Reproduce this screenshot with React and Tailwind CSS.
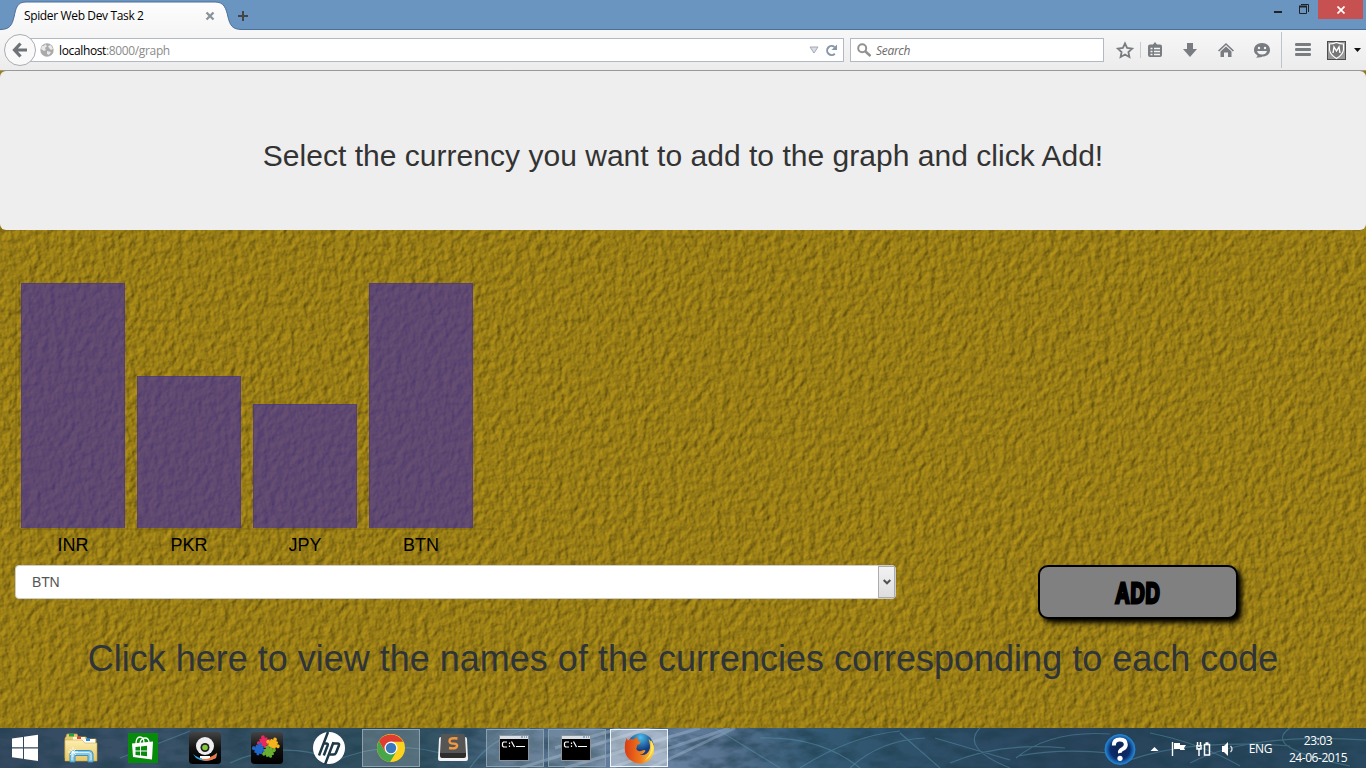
import React from "react";

const bars = [
  { code: "INR", height: "h-[245px]" },
  { code: "PKR", height: "h-[152px]" },
  { code: "JPY", height: "h-[124px]" },
  { code: "BTN", height: "h-[245px]" },
];

function TabStrip() {
  return (
    <div className="relative flex h-[30px] shrink-0 items-start border-b border-[#4c6f9a] bg-[#6a95c0]">
      <svg className="absolute left-0 top-0" width="250" height="31">
        <defs>
          <linearGradient id="tab" x2="0" y2="1">
            <stop stopColor="#fdfdfd" />
            <stop offset="1" stopColor="#f6f6f6" />
          </linearGradient>
        </defs>
        <path d="M0 31V29.5C10 29.5 12 25 14 17C16 8 17 2 26 2H215C224 2 226 8 228 17C230 25 232 29.5 242 29.5V31Z" fill="url(#tab)" />
        <path d="M0 29.5C10 29.5 12 25 14 17C16 8 17 2 26 2H215C224 2 226 8 228 17C230 25 232 29.5 242 29.5" fill="none" stroke="#4c6f9a" />
      </svg>
      <div className="relative flex h-[32px] w-[250px] items-center pl-6">
        <span className="w-[181px] whitespace-nowrap font-['Open_Sans',sans-serif] text-[12px] tracking-[-0.36px] text-black">Spider Web Dev Task 2</span>
        <svg width="10" height="10" viewBox="0 0 10 10" stroke="#89929b" strokeWidth="2.3"><path d="M1.500 1.500l7 7M8.500 1.500l-7 7" /></svg>
        <svg className="ml-[23px] shrink-0" width="10" height="10" viewBox="0 0 10 10" stroke="#454545" strokeWidth="2"><path d="M5 0v10M0 5h10" /></svg>
      </div>
      <div className="ml-auto mr-[3px] flex">
        <svg width="64" height="20">
          <rect x="0" y="11" width="8" height="2" fill="#222" />
          <path d="M25.500 6.500h7v7h-7zM27 4.500h7.500v7.500" fill="none" stroke="#222" />
          <path d="M25 6.500h8" stroke="#222" strokeWidth="2" />
        </svg>
        <div className="-ml-[20px] flex h-[19px] w-[45px] items-center justify-center bg-[#c75050]">
          <svg width="8" height="8" viewBox="0 0 8 8" stroke="#fff" strokeWidth="1.7"><path d="M.5 .5l7 7M7.500 .5l-7 7" /></svg>
        </div>
      </div>
    </div>
  );
}

function ToolbarIcons() {
  return (
    <svg width="262" height="40" viewBox="1104 30 262 40" className="shrink-0">
      <g fill="#797c80">
        <path d="M1125 43.500l2.100 4.500 5 .6-3.700 3.400 1 5-4.400-2.500-4.400 2.500 1-5-3.700-3.400 5-.6z" fill="none" stroke="#797c80" strokeWidth="1.800" />
        <path d="M1140.500 42v16" stroke="#c8ccd2" />
        <path d="M1150 44.500h3l2-2.500 2 2.500h3q2 0 2 2v8.500q0 2-2 2h-10q-2 0-2-2v-8.500q0-2 2-2z" />
        <path d="M1150.500 48.500h2M1154 48.500h6M1150.500 51.500h2M1154 51.500h6M1150.500 54.500h2M1154 54.500h6" stroke="#f5f5f5" strokeWidth="1.500" />
        <path d="M1187 43h6v6h4l-7 8-7-8h4z" />
        <path d="M1226 43l8 7.500-1.200 1-6.800-6.500-6.800 6.500-1.200-1z" />
        <path d="M1226 46.500l5.500 5v5.500h-3.500v-4.500h-4v4.500h-3.500v-5.500z" />
        <path d="M1262 43c4.800 0 8 3 8 7s-3.200 6.500-7.500 6.500q-1.200 1-6.500 1.300q1.800-1.400 1.400-2.500c-2-1-3.400-3-3.400-5.300 0-4 3.200-7 8-7z" />
        <circle cx="1259" cy="48" r="1.200" fill="#f4f4f4" /><circle cx="1265" cy="48" r="1.200" fill="#f4f4f4" />
        <path d="M1257 51h10q-1 3.500-5 3.500t-5-3.500" fill="#f4f4f4" />
        <path d="M1281.500 32v36" stroke="#bfc4ca" />
        <rect x="1295" y="43" width="16" height="3" rx="1.200" /><rect x="1295" y="48" width="16" height="3" rx="1.200" /><rect x="1295" y="53" width="16" height="3" rx="1.200" />
      </g>
      <rect x="1327.500" y="41.500" width="18" height="18" fill="#999" stroke="#4d4d4d" />
      <path d="M1329.500 44q3.500 0 7-1.500 3.500 1.500 7 1.500v6q-1 5-7 8.500-6-3.500-7-8.500z" fill="#777" stroke="#fff" strokeWidth="1.200" />
      <path d="M1333 53l1-6 2.500 4 2.500-4 1 6" stroke="#fff" strokeWidth="1.400" fill="none" />
      <path d="M1354 48h7l-3.500 4z" fill="#111" />
    </svg>
  );
}

function Toolbar() {
  return (
    <div className="flex h-[41px] shrink-0 items-center border-b border-[#999] bg-gradient-to-b from-[#f7f7f7] to-[#ececec] font-['Open_Sans',sans-serif] text-[12px]">
      <div className="z-10 ml-[4px] flex size-[32px] shrink-0 items-center justify-center rounded-full border border-[#a8adb2] bg-[#f9f9f9]">
        <svg width="16" height="16" viewBox="0 0 16 16" fill="none" stroke="#6e7377" strokeWidth="3.200"><path d="M8.500 1.500L2.500 8l6 6.500M2.500 8H15" /></svg>
      </div>
      <div className="-ml-[6px] flex h-[24px] w-[814px] items-center border border-[#b1bac4] bg-white pl-[9px] pr-[5px]">
        <svg width="14" height="14" viewBox="0 0 14 14"><circle cx="7" cy="7" r="6.700" fill="#aaa" /><path d="M2 3q3 0 3-2l2 2-2 2 1 2-2 1-3-2zM8 3l3-1 2 4-2 1-2-2zM7 8l4 1-2 3-2-1z" fill="#e8e8e8" /></svg>
        <span className="ml-[5px] pt-[2px] tracking-[-0.36px] text-black">localhost<span className="text-[#8b8b8b]">:8000/graph</span></span>
        <svg className="ml-auto" width="10" height="8"><path d="M1 1h8l-4 6z" fill="#d8dde6" stroke="#a3aab3" /></svg>
        <svg className="ml-[6px]" width="13" height="13" viewBox="0 0 13 13"><path d="M9.800 9.700A4.500 4.500 0 1 1 9.500 3" fill="none" stroke="#8796a6" strokeWidth="2" /><path d="M12 .5V6H6.500z" fill="#8796a6" /></svg>
      </div>
      <div className="ml-[6px] flex h-[24px] w-[254px] items-center border border-[#b1bac4] bg-white pl-[6px]">
        <svg width="14" height="14" viewBox="0 0 14 14" fill="none" stroke="#929292" strokeWidth="2"><circle cx="5.200" cy="5.200" r="4" /><path d="M8 8l5.500 5" strokeWidth="2.600" /></svg>
        <span className="ml-[5px] pt-[2px] italic tracking-[-0.3px] text-[#6b6b6b]">Search</span>
      </div>
      <ToolbarIcons />
    </div>
  );
}

function StoneTexture() {
  return (
    <svg className="absolute inset-0 size-full" aria-hidden="true">
      <filter id="stone" x="0" y="0" width="100%" height="100%" colorInterpolationFilters="sRGB">
        <feTurbulence type="fractalNoise" baseFrequency="0.15 0.12" numOctaves="4" seed="8" result="n" />
        <feColorMatrix in="n" type="matrix" values="0 0 0 0 0  0 0 0 0 0  0 0 0 0 0  1 0 0 0 0" />
        <feDiffuseLighting surfaceScale="1.200" diffuseConstant="1.100" lightingColor="#ab8c18">
          <feDistantLight azimuth="215" elevation="54" />
        </feDiffuseLighting>
      </filter>
      <rect width="100%" height="100%" fill="#a08015" filter="url(#stone)" />
    </svg>
  );
}

function Page() {
  return (
    <main className="relative flex h-[657px] flex-col overflow-hidden bg-[#a08015] font-['Liberation_Sans',sans-serif]">
      <StoneTexture />
      <header className="relative flex h-[159px] shrink-0 items-center justify-center rounded-[6px] bg-[#eee] pt-[9px]">
        <h1 className="whitespace-nowrap text-[30px] leading-[33px] tracking-[0.025px] text-[#333]">Select the currency you want to add to the graph and click Add!</h1>
      </header>
      <section className="relative ml-[15px] mt-[47px] w-[482px]">
        <div className="flex h-[253px] items-end gap-[12px] border-b-2 border-l-2 border-[#6b5710]/25 pl-[4px]">
          {bars.map((b) => (
            <div key={b.code} className={"w-[104px] border border-b-0 border-[#4b3677]/50 bg-[#402da2]/65 " + b.height} />
          ))}
        </div>
        <div className="flex gap-[12px] pl-[6px] pt-[3px]">
          {bars.map((b) => (
            <span key={b.code} className="w-[104px] text-center text-[18px] leading-[24px] text-black">{b.code}</span>
          ))}
        </div>
      </section>
      <div className="relative mt-[8px] flex h-[56px] items-start pl-[15px]">
        <div className="flex h-[34px] w-[881px] shrink-0 items-center justify-between rounded-[4px] border border-[#ccc] bg-white pl-[16px] text-[14px] tracking-[-0.2px] text-[#555]">
          BTN
          <span className="flex h-full w-[17px] items-center justify-center border border-[#acacac] bg-gradient-to-b from-[#f2f2f2] to-[#dedede]">
            <svg width="8" height="6" viewBox="0 0 8 6" fill="none" stroke="#505050" strokeWidth="2"><path d="M.7 1L4 4.300 7.300 1" /></svg>
          </span>
        </div>
        <button className="ml-[142px] flex h-[54px] w-[200px] items-center justify-center rounded-[10px] border-2 border-black bg-[#808080] pt-[3px] shadow-[4px_4px_5px_#000]">
          <span className="inline-block scale-x-[0.680] -skew-x-2 font-['Liberation_Sans',sans-serif] text-[29px] font-bold leading-none tracking-[1px] text-black [-webkit-text-stroke:3px_black]">ADD</span>
        </button>
      </div>
      <p className="relative mt-[18px] whitespace-nowrap text-center text-[36px] leading-[40px] text-[#2e3438]">Click here to view the names of the currencies corresponding to each code</p>
    </main>
  );
}

function Slot({ children, active = "" }) {
  return <div className={"flex h-[38px] w-[58px] shrink-0 items-center justify-center border " + (active || "border-transparent")}>{children}</div>;
}

function WindowsIcon() {
  return <svg width="28" height="28" viewBox="0 0 28 28" fill="#fff"><path d="M1 4.500L12 3V13.300H1zM13 2.800L27 .8V13.300H13zM1 14.500H12V24.800L1 23.300zM13 14.500H27V27L13 25z" /></svg>;
}

function FolderIcon() {
  return (
    <svg width="34" height="32" viewBox="0 0 34 32">
      <defs><linearGradient id="fold" x2="0" y2="1"><stop stopColor="#fdeeb0" /><stop offset="1" stopColor="#e5c867" /></linearGradient></defs>
      <path d="M2 5l1-3h10l1 3h8l1 2h9v19H1V6z" fill="#e6ca72" stroke="#c5a34c" strokeWidth=".7" />
      <rect x="5" y="2" width="5" height="2.500" fill="#1ba836" /><path d="M9 5h12v5H9z" fill="#fff5d0" /><rect x="13" y="4.500" width="4" height="2.500" fill="#d54e31" />
      <path d="M19 7h12v4H19z" fill="#fff" /><rect x="22" y="6.500" width="4" height="2.500" fill="#2987d4" />
      <path d="M1 8h17l3 3h12v18H1z" fill="url(#fold)" stroke="#cba84c" strokeWidth=".6" />
      <path d="M6 30V22q0-3.500 4-3.500h15q4 0 4 3.500v8h-5v-6.500H11V30z" fill="#8ac8e2" stroke="#3c92bd" />
      <path d="M8 28v-5.500q0-2 3-2h13q3 0 3 2V28" fill="none" stroke="#d2f1fb" />
      <path d="M9 15v10M4 20h10M6 17l6 6M12 17l-6 6" stroke="#fff" strokeWidth=".8" />
    </svg>
  );
}

function StoreIcon() {
  return (
    <svg width="30" height="30" viewBox="0 0 30 30">
      <rect width="30" height="30" fill="#078b0b" />
      <path d="M4 10.500l21-2-1 18L5 24z" fill="#fff" />
      <path d="M8 11q0-7 4-7t4 6M12 10q1-5 5-5t4 5" fill="none" stroke="#fff" strokeWidth="1.300" />
      <path d="M7.500 14l4.500-.5v4H7.500zM13 13.400l6-.6v4.700h-6zM7.500 18.500H12v4l-4.500-.5zM13 18.500h6v4.700l-6-.6z" fill="#078b0b" />
    </svg>
  );
}

function BlackTile({ children }) {
  return (
    <svg width="32" height="32" viewBox="0 0 32 32">
      <defs><linearGradient id="tile" x2="0" y2="1"><stop stopColor="#444" /><stop offset=".5" stopColor="#111" /><stop offset="1" /></linearGradient></defs>
      <rect width="32" height="32" rx="3.500" fill="url(#tile)" />
      {children}
    </svg>
  );
}

function PuzzlePiece({ x, y, fill, turn }) {
  return (
    <g transform={`translate(${x} ${y}) rotate(${turn})`} fill={fill}>
      <rect x="-4" y="-4" width="8" height="8" /><circle cx="0" cy="-5" r="1.900" /><circle cx="5.300" cy="0" r="1.900" /><circle cx="-5.300" cy="0" r="1.900" /><circle cx="0" cy="4.500" r="1.500" />
    </g>
  );
}

function HpIcon() {
  return (
    <svg width="32" height="32" viewBox="0 0 32 32">
      <circle cx="16" cy="16" r="16" fill="#fff" />
      <g fill="none" stroke="#1d3847" strokeWidth="2.500">
        <path d="M15 0L6 23.500M10 11.500h3.300q2 0 1.300 2L10.800 23.500M20.500 10.200L12 32.500" />
        <path d="M20 11.500h4.500q2.200 0 1.400 2l-2.900 7.300q-.8 1.800-2.500 1.800h-4" />
      </g>
    </svg>
  );
}

function ChromeIcon() {
  return (
    <svg width="28" height="28" viewBox="0 0 28 28">
      <circle cx="14" cy="14" r="14" fill="#fbd31f" />
      <path d="M1.900 7A14 14 0 0 1 26.100 7.700H14L8 17.500z" fill="#df3d32" />
      <path d="M1.900 7A14 14 0 0 0 13 28L19.500 17.500H8z" fill="#47a64a" />
      <circle cx="14" cy="14" r="6.500" fill="#fff" /><circle cx="14" cy="14" r="5.200" fill="#3978bd" />
    </svg>
  );
}

function SublimeIcon() {
  return (
    <svg width="30" height="28" viewBox="0 0 30 28">
      <path d="M1 5q0-2 2-2h24q2 0 2 2l1 20q0 2-2 2H2q-2 0-2-2z" fill="#f2f2f2" />
      <path d="M3 2q0-2 2-2h20q2 0 2 2l1 17H2z" fill="#555" /><path d="M2 19h26v3q0 2-2 2H4q-2 0-2-2z" fill="#2c2c2c" />
      <path d="M19.500 4.500Q12 3.500 11.500 6.500T15.500 9.700 19 12.500 11 14" fill="none" stroke="#f29a42" strokeWidth="2.300" />
    </svg>
  );
}

function TerminalIcon() {
  return (
    <svg className="-translate-x-px" width="30" height="26" viewBox="0 0 30 26">
      <rect x=".5" y=".5" width="29" height="25" fill="#000" stroke="#8b929a" />
      <rect x="1" y="1" width="28" height="3" fill="#d9dee5" /><path d="M22 2h2M25 2h1M27 2h1" stroke="#496a9a" />
      <g stroke="#fff" strokeWidth="1.200" fill="none"><path d="M8 7H4.500L3.500 8v3l1 1H8M10.500 7.500v1.500M10.500 10.500v1.500M12.500 6.500l3 5.500M17 11.500h9" /></g>
    </svg>
  );
}

function FirefoxIcon() {
  return (
    <svg width="31" height="31" viewBox="0 0 31 31">
      <defs>
        <linearGradient id="fox" x1="0" x2="1"><stop stopColor="#d93c13" /><stop offset=".55" stopColor="#f07a1d" /><stop offset="1" stopColor="#ffd83f" /></linearGradient>
        <radialGradient id="globe" cx=".5" cy=".15"><stop stopColor="#4cc0ec" /><stop offset="1" stopColor="#123c84" /></radialGradient>
      </defs>
      <circle cx="16.500" cy="13.500" r="13" fill="url(#globe)" />
      <path d="M2.500 5q1 1 1.300 2.500Q6 5 10 6.500q1-2 3.500-2.500-.8 2.500 1.200 4.500h2.500q-1 2.500-4 3.500-.5 3-1 4 2.500 3.500 6 1.500 3-1 3.200.6-2 3.500-6 3.500 7 2 10-4.500Q27 13 24.500 6q4.500 3 5.500 8c1 10-6 16.500-14 16.500S0 23.500.8 15Q.8 9 2.500 5z" fill="url(#fox)" />
      <path d="M27 7q4 6 1.500 12T20 28q6-5 6.800-11T27 7z" fill="#ffe768" />
    </svg>
  );
}

function TaskbarBackdrop() {
  return (
    <svg className="absolute inset-0" width="1366" height="40" aria-hidden="true">
      <defs>
        <linearGradient id="bar"><stop stopColor="#34495f" /><stop offset=".12" stopColor="#3a5268" /><stop offset=".3" stopColor="#2c4d5c" /><stop offset=".37" stopColor="#4a6882" /><stop offset=".48" stopColor="#6d86a6" /><stop offset=".53" stopColor="#56728f" /><stop offset=".6" stopColor="#335a74" /><stop offset=".78" stopColor="#29445c" /><stop offset="1" stopColor="#28495f" /></linearGradient>
        <filter id="soft"><feGaussianBlur stdDeviation=".7" /></filter>
        <filter id="mottle" x="0" y="0" width="100%" height="100%" colorInterpolationFilters="sRGB"><feTurbulence type="fractalNoise" baseFrequency=".04 .09" numOctaves="4" seed="4" /><feColorMatrix values="0 0 0 0 .12  0 0 0 0 .24  0 0 0 0 .3  2.400 0 0 0 -.9" /></filter>
      </defs>
      <rect width="1366" height="40" fill="url(#bar)" />
      <rect width="1366" height="40" filter="url(#mottle)" opacity=".6" />
      <g filter="url(#soft)" fill="none" stroke="#5d98ad" strokeWidth="1.200" opacity=".45">
        <path d="M715 0L780 40M800 40Q850 8 900 3M850 40Q880 12 925 10M900 5L940 40M935 10L1010 32M950 35Q1000 14 1065 20M1016 30Q1050 2 1110 6M1018 28Q1060 20 1110 25M1120 36Q1180 10 1290 18M1150 5Q1200 15 1240 38M1190 35Q1250 4 1366 12M760 10Q820 8 860 40M980 0Q960 20 1010 40M1290 0Q1260 20 1350 38" />
        <path d="M470 40Q490 10 530 0M330 35Q390 8 450 28M120 30Q160 15 190 3M230 35Q280 12 330 30" />
      </g>
      <g filter="url(#soft)" stroke="#b7cbe0" strokeWidth="3" opacity=".32"><path d="M520 40L650 0M565 40L700 0M610 40L730 0M650 40L735 0M555 20L620 0" /></g>
    </svg>
  );
}

function Taskbar() {
  return (
    <footer className="relative flex h-[40px] shrink-0 items-center overflow-hidden bg-[#29465b]">
      <TaskbarBackdrop />
      <div className="relative flex h-[40px] items-center gap-[4px] pl-[52px]">
        <div className="-ml-[41px] mr-[8px] w-[29px]"><WindowsIcon /></div>
        <Slot><FolderIcon /></Slot>
        <Slot><StoreIcon /></Slot>
        <Slot>
          <BlackTile>
            <path d="M4 22q12 10 24-1l-1 5q-11 6-20 0z" fill="#35a8dd" /><path d="M13 26q8 1 15-5l-1 5q-7 4-14 2z" fill="#ef7945" />
            <circle cx="16" cy="14" r="9" fill="#eee" /><circle cx="16" cy="15.500" r="4.500" fill="#222" /><circle cx="16" cy="15.500" r="2.800" fill="#83cb34" />
            <path d="M11 24h10v2q-5 2-10 0z" fill="#fff" />
          </BlackTile>
        </Slot>
        <Slot>
          <BlackTile>
            <PuzzlePiece x={13} y={10} fill="#e9285d" turn={-12} /><PuzzlePiece x={22} y={12} fill="#f4b41d" turn={24} /><PuzzlePiece x={8} y={17.500} fill="#2167c8" turn={14} /><PuzzlePiece x={18} y={20} fill="#68ae31" turn={-20} />
          </BlackTile>
        </Slot>
        <Slot><HpIcon /></Slot>
        <Slot active="border-[#8ea0aa] bg-white/20"><ChromeIcon /></Slot>
        <Slot><SublimeIcon /></Slot>
        <Slot active="border-[#8b9eac] bg-white/15"><TerminalIcon /></Slot>
        <Slot active="border-[#8b9eac] bg-white/15"><TerminalIcon /></Slot>
        <Slot active="border-[#eef5fa] bg-white/40"><FirefoxIcon /></Slot>
      </div>
      <div className="relative ml-auto mr-[18px] flex h-[40px] items-center font-['Open_Sans',sans-serif] text-[12px] text-white">
        <svg width="136" height="40" viewBox="1104 728 136 40">
          <defs><radialGradient id="help"><stop stopColor="#10224e" /><stop offset=".65" stopColor="#0b2c6c" /><stop offset="1" stopColor="#2589d8" /></radialGradient></defs>
          <circle cx="1120" cy="749.500" r="15" fill="url(#help)" stroke="#2184d0" />
          <path d="M1113.800 745.500q0-6 6-6t6 5q0 3-3.200 4.500t-2.600 4" stroke="#fff" strokeWidth="4" fill="none" /><circle cx="1120" cy="758.300" r="2.600" fill="#fff" />
          <path d="M1150.500 751h8l-4-4z" fill="#fff" />
          <path d="M1172.500 742v14" stroke="#fff" strokeWidth="1.400" /><path d="M1174 743h6v2h6l-2 3 1 2h-5v-1h-6z" fill="#fff" />
          <g fill="none" stroke="#fff" strokeWidth="1.500"><path d="M1196 746h6M1197.500 742v4M1200.500 742v4M1199 748v8M1197 747v2h4v-2" /><path d="M1204.500 744.500h5v10.500h-5zM1205.500 743h3" /></g>
          <path d="M1222 746h2l4-4v14l-4-4h-2z" fill="#fff" /><path d="M1230.500 746q3 3 0 6" stroke="#ddd" fill="none" strokeWidth="1.300" />
        </svg>
        <span className="ml-[9px] pt-px tracking-[-0.4px]">ENG</span>
        <div className="ml-[16px] flex w-[60px] flex-col items-center whitespace-nowrap pt-px leading-[17px]"><span className="tracking-[-0.4px]">23:03</span><span className="tracking-[-0.45px]">24-06-2015</span></div>
      </div>
    </footer>
  );
}

export default function App() {
  return (
    <div className="flex h-[768px] w-[1366px] flex-col overflow-hidden">
      <TabStrip />
      <Toolbar />
      <Page />
      <Taskbar />
    </div>
  );
}
